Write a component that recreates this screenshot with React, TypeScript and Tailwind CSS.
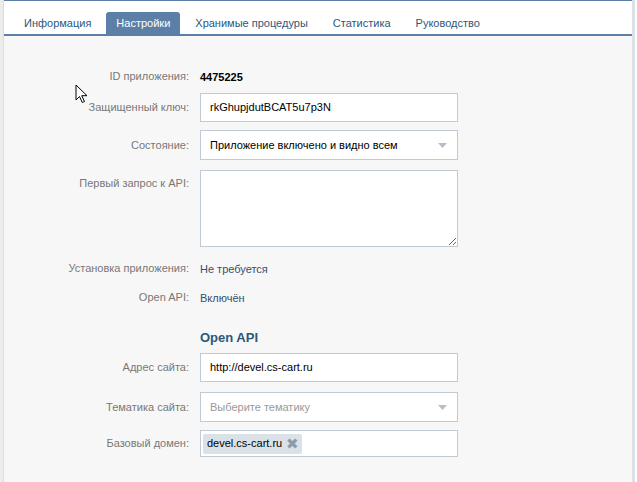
import React from "react";

const tabs = [
  "Информация",
  "Настройки",
  "Хранимые процедуры",
  "Статистика",
  "Руководство",
];

function Row({
  label,
  children,
  top = false,
  className = "",
}: {
  label: string;
  children: React.ReactNode;
  top?: boolean;
  className?: string;
}) {
  return (
    <div className={`flex gap-[11px] ${top ? "items-start" : "items-center"} ${className}`}>
      <div
        className={`w-[185px] shrink-0 text-right text-[11px] text-[#777] ${top ? "pt-[5px]" : ""}`}
      >
        {label}
      </div>
      <div className="w-[258px]">{children}</div>
    </div>
  );
}

function Arrow() {
  return (
    <svg width="9" height="5" viewBox="0 0 9 5" className="shrink-0">
      <path d="M0 0h9L4.5 5z" fill="#b6bfc9" />
    </svg>
  );
}

export default function App() {
  return (
    <div
      className="relative w-[637px] h-[482px] overflow-hidden bg-white flex"
      style={{ fontFamily: '"Liberation Sans", Arial, sans-serif' }}
    >
      <div className="w-[4px] shrink-0 bg-[#ececec] border-r border-[#dcdcdc]" />
      <div className="w-[628px] shrink-0 flex flex-col border-t border-[#5b7fa6]">
        {/* tabs */}
        <div className="h-[35px] bg-white flex items-end gap-[5px] pl-[10px] border-b-2 border-[#5b7fa6]">
          {tabs.map((t) => (
            <div
              key={t}
              className={`h-[22px] px-[10px] flex items-center text-[11px] rounded-t-[3px] ${
                t === "Настройки" ? "bg-[#5b7fa6] text-white" : "text-[#2b587a]"
              }`}
            >
              {t}
            </div>
          ))}
        </div>

        {/* form */}
        <div className="flex-1 bg-[#f7f7f7] pt-[31px] flex flex-col">
          <Row label="ID приложения:" className="h-[18px]">
            <span className="text-[11px] font-bold text-black">4475225</span>
          </Row>
          <Row label="Защищенный ключ:" className="mt-[8px]">
            <div className="h-[29px] bg-white border border-[#c0cad5] flex items-center px-[9px] text-[11px] text-black">
              rkGhupjdutBCAT5u7p3N
            </div>
          </Row>
          <Row label="Состояние:" className="mt-[8px]">
            <div className="h-[30px] bg-white border border-[#c0cad5] flex items-center justify-between pl-[9px] pr-[10px] text-[11px] text-black">
              <span>Приложение включено и видно всем</span>
              <Arrow />
            </div>
          </Row>
          <Row label="Первый запрос к API:" top className="mt-[10px]">
            <textarea
              className="block w-[258px] h-[77px] bg-white border border-[#c0cad5] outline-none"
              defaultValue=""
            />
          </Row>
          <Row label="Установка приложения:" className="mt-[12px] h-[18px]">
            <span className="text-[11px] text-[#34506f]">Не требуется</span>
          </Row>
          <Row label="Open API:" className="mt-[11px] h-[18px]">
            <span className="text-[11px] text-[#34506f]">Включён</span>
          </Row>
          <Row label="" className="mt-[21px] h-[20px]">
            <span className="text-[13px] font-bold text-[#2b587a]">Open API</span>
          </Row>
          <Row label="Адрес сайта:" className="mt-[6px]">
            <div className="h-[29px] bg-white border border-[#c0cad5] flex items-center px-[9px] text-[11px] text-black">
              http://devel.cs-cart.ru
            </div>
          </Row>
          <Row label="Тематика сайта:" className="mt-[10px]">
            <div className="h-[30px] bg-white border border-[#c0cad5] flex items-center justify-between pl-[9px] pr-[10px] text-[11px] text-[#999]">
              <span>Выберите тематику</span>
              <Arrow />
            </div>
          </Row>
          <Row label="Базовый домен:" className="mt-[8px]">
            <div className="h-[27px] bg-white border border-[#c0cad5] flex items-center px-[2px]">
              <span className="h-[20px] flex items-center gap-[4px] bg-[#dae2e8] rounded-[2px] pl-[4px] pr-[3px] text-[11px] text-black">
                devel.cs-cart.ru
                <span className="text-[15px] leading-none text-[#8c9bab]">✖</span>
              </span>
            </div>
          </Row>
        </div>
      </div>
      <div className="w-[3px] shrink-0 bg-[#dde1e7]" />
      <div className="flex-1 bg-white" />

      {/* mouse pointer */}
      <svg
        className="absolute left-[75px] top-[84px]"
        width="14"
        height="20"
        viewBox="0 0 14 20"
      >
        <path
          d="M1 1v15l3.5-3.5 2.8 6 2.2-1-2.8-5.8H12z"
          fill="#fff"
          stroke="#000"
          strokeWidth="1"
          strokeLinejoin="round"
        />
      </svg>
    </div>
  );
}
